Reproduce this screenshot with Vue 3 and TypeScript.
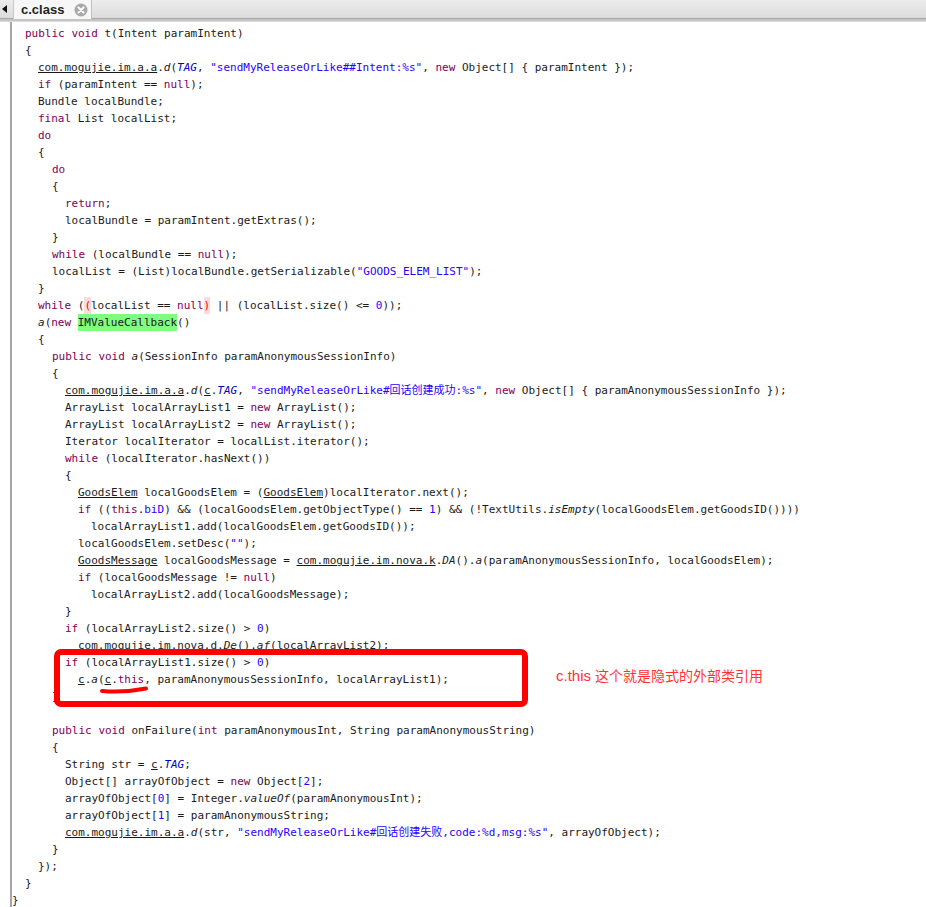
<script setup lang="ts">
type Tok = { t: string; c: string }
const src: [number, string][] = [
  [2, '[k public] [k void] t(Intent paramIntent)'],
  [2, '{'],
  [3, '[u com.mogujie.im.a.a].[i d]([f TAG], [s "sendMyReleaseOrLike##Intent:%s"], [k new] Object[] { paramIntent });'],
  [3, '[k if] (paramIntent == [k null]);'],
  [3, 'Bundle localBundle;'],
  [3, '[k final] List localList;'],
  [3, '[k do]'],
  [3, '{'],
  [4, '[k do]'],
  [4, '{'],
  [5, '[k return];'],
  [5, 'localBundle = paramIntent.getExtras();'],
  [4, '}'],
  [4, '[k while] (localBundle == [k null]);'],
  [4, 'localList = (List)localBundle.getSerializable([s "GOODS_ELEM_LIST"]);'],
  [3, '}'],
  [3, '[k while] ([r (]localList == [k null][r )] || (localList.size() <= [n 0]));'],
  [3, '[i a]([k new] [h IMValueCallback]()'],
  [3, '{'],
  [4, '[k public] [k void] [i a](SessionInfo paramAnonymousSessionInfo)'],
  [4, '{'],
  [5, '[u com.mogujie.im.a.a].[i d]([u c].[f TAG], [s "sendMyReleaseOrLike#回话创建成功:%s"], [k new] Object[] { paramAnonymousSessionInfo });'],
  [5, 'ArrayList localArrayList1 = [k new] ArrayList();'],
  [5, 'ArrayList localArrayList2 = [k new] ArrayList();'],
  [5, 'Iterator localIterator = localList.iterator();'],
  [5, '[k while] (localIterator.hasNext())'],
  [5, '{'],
  [6, '[u GoodsElem] localGoodsElem = ([u GoodsElem])localIterator.next();'],
  [6, '[k if] (([k this].[s biD]) && (localGoodsElem.getObjectType() == [n 1]) && (!TextUtils.[i isEmpty](localGoodsElem.getGoodsID())))'],
  [7, 'localArrayList1.add(localGoodsElem.getGoodsID());'],
  [6, 'localGoodsElem.setDesc([s ""]);'],
  [6, '[u GoodsMessage] localGoodsMessage = [u com.mogujie.im.nova.k].[i DA]().[i a](paramAnonymousSessionInfo, localGoodsElem);'],
  [6, '[k if] (localGoodsMessage != [k null])'],
  [7, 'localArrayList2.add(localGoodsMessage);'],
  [5, '}'],
  [5, '[k if] (localArrayList2.size() > [n 0])'],
  [6, '[u com.mogujie.im.nova.d].[i De]().[i af](localArrayList2);'],
  [5, '[k if] (localArrayList1.size() > [n 0])'],
  [6, '[u c].[i a]([u c].[k this], paramAnonymousSessionInfo, localArrayList1);'],
  [4, '}'],
  [4, ''],
  [4, '[k public] [k void] onFailure([k int] paramAnonymousInt, String paramAnonymousString)'],
  [4, '{'],
  [5, 'String str = [u c].[f TAG];'],
  [5, 'Object[] arrayOfObject = [k new] Object[[n 2]];'],
  [5, 'arrayOfObject[[n 0]] = Integer.[i valueOf](paramAnonymousInt);'],
  [5, 'arrayOfObject[[n 1]] = paramAnonymousString;'],
  [5, '[u com.mogujie.im.a.a].[i d](str, [s "sendMyReleaseOrLike#回话创建失败,code:%d,msg:%s"], arrayOfObject);'],
  [4, '}'],
  [3, '});'],
  [2, '}'],
  [1, '}']
]

function parse(s: string): Tok[] {
  const out: Tok[] = []
  const re = /\[([kuifsnhr]) ([^\]]*)\]/g
  let last = 0
  let m: RegExpExecArray | null
  while ((m = re.exec(s))) {
    if (m.index > last) out.push({ t: s.slice(last, m.index), c: '' })
    out.push({ t: m[2], c: m[1] })
    last = m.index + m[0].length
  }
  if (last < s.length) out.push({ t: s.slice(last), c: '' })
  return out
}

const lines = src.map(([d, s]) => ({ d, toks: parse(s) }))
</script>

<template>
  <div class="page">
    <header class="tabbar">
      <div class="nav"><span class="arrow"></span></div>
      <div class="tab">
        <span class="tabname">c.class</span>
        <svg class="close" width="14" height="14" viewBox="0 0 14 14">
          <circle cx="7" cy="7" r="6.5" fill="#a9a9a9" />
          <path d="M4.4 4.4 9.6 9.6M9.6 4.4 4.4 9.6" stroke="#fff" stroke-width="2" stroke-linecap="round" />
        </svg>
      </div>
    </header>
    <div class="strip"></div>
    <main class="editor">
      <div v-for="(l, i) in lines" :key="i" class="line" :class="'d' + l.d">
        <span v-for="(t, j) in l.toks" :key="j" :class="t.c">{{ t.t }}</span>
      </div>
      <div class="box"></div>
      <svg class="ink" width="60" height="12" viewBox="0 0 60 12">
        <path d="M3 8C15 9 32 8.5 47 5.5" fill="none" stroke="#f00" stroke-width="4" stroke-linecap="round" />
      </svg>
      <div class="note"><span class="notelat">c.this</span> 这个就是隐式的外部类引用</div>
    </main>
  </div>
</template>

<style>
html, body { margin: 0; background: #fff; }
</style>

<style scoped>
.page { width: 926px; height: 907px; overflow: hidden; background: #fff; }
.tabbar {
  height: 18px;
  display: flex;
  background: linear-gradient(#ececec, #dcdcdc);
  border-bottom: 1px solid #a8a8a8;
}
.nav { width: 13px; display: flex; align-items: center; padding-left: 2px; box-sizing: border-box; }
.arrow { width: 0; height: 0; border-top: 4px solid transparent; border-bottom: 4px solid transparent; border-right: 5px solid #111; }
.tab {
  width: 79px;
  height: 19px;
  box-sizing: border-box;
  display: flex;
  align-items: center;
  gap: 10px;
  padding-left: 7px;
  background: #f7f7f7;
  border-left: 1px solid #c9c9c9;
  border-right: 1px solid #c0c0c0;
}
.tabname { font: bold 13px "Liberation Sans", sans-serif; color: #222; }
.close { flex: none; }
.strip { height: 3px; background: #c4c4c4; border-bottom: 1px solid #ddd; box-sizing: border-box; }
.editor {
  position: relative;
  height: 885px;
  margin-left: 10px;
  padding-top: 3px;
  box-sizing: border-box;
  border-left: 2px solid #a6a6a6;
  font: 11px/17px "DejaVu Sans Mono", "Noto Sans CJK SC", monospace;
  color: #1a1a1a;
}
.line { height: 17px; white-space: pre; }
.d1 { padding-left: 0; }
.d2 { padding-left: 13px; }
.d3 { padding-left: 26px; }
.d4 { padding-left: 40px; }
.d5 { padding-left: 53px; }
.d6 { padding-left: 66px; }
.d7 { padding-left: 79px; }
.k { color: #7f0055; }
.u { text-decoration: underline; }
.i { font-style: italic; }
.s { color: #2a00ff; }
.f { color: #0000c0; font-style: italic; }
.n { color: #2a00ff; }
.h { display: inline-block; background: #80fc80; }
.r { display: inline-block; background: #ffdcdc; color: #f00; }
.box {
  position: absolute;
  left: 42px;
  top: 627px;
  width: 474px;
  height: 58px;
  box-sizing: border-box;
  border: 6px solid #f00;
  border-radius: 7px;
}
.ink { position: absolute; left: 87px; top: 661px; }
.note {
  position: absolute;
  left: 544px;
  top: 645px;
  font: 14px/18px "Liberation Sans", "Noto Sans CJK SC", sans-serif;
  color: #f33;
  white-space: pre;
}
.notelat { font-size: 15px; }
</style>
